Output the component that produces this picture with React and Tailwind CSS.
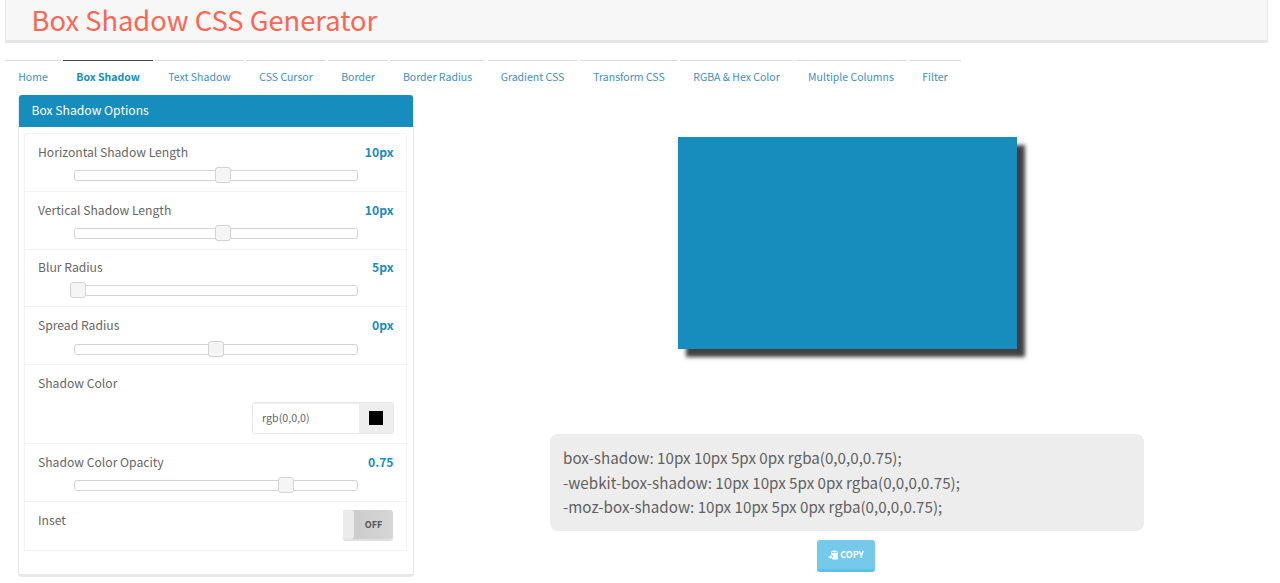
import React from "react";

const tabs = [
  ["Home", "w-[56px] mr-[2px]"],
  ["Box Shadow", "w-[90px] mr-[2px]"],
  ["Text Shadow", "w-[89px] mr-[2px]"],
  ["CSS Cursor", "w-[80px] mr-[2px]"],
  ["Border", "w-[60px] mr-[2px]"],
  ["Border Radius", "w-[95px] mr-[3px]"],
  ["Gradient CSS", "w-[89px] mr-[3px]"],
  ["Transform CSS", "w-[98px] mr-[2px]"],
  ["RGBA & Hex Color", "w-[113px] mr-[2px]"],
  ["Multiple Columns", "w-[112px] mr-[2px]"],
  ["Filter", "w-[52px]"],
];

function Row({ label, value, height, pad = "pt-[8px]", children }) {
  return (
    <div className={"flex flex-col border-b border-[#f3f3f3] pl-[13px] pr-[13px] " + pad + " " + height}>
      <div className="flex h-5 shrink-0 items-center justify-between">
        <span>{label}</span>
        {value && <b className="-mr-[0.5px] text-[#168dbc]">{value}</b>}
      </div>
      {children}
    </div>
  );
}

function Slider({ left }) {
  return (
    <div className="relative mt-[8px] ml-[36px] h-[11px] w-[284px] rounded-[3px] border border-[#d3d3d3] bg-white">
      <div
        className="absolute -top-[4px] h-4 w-4 rounded-[3px] border border-[#d3d3d3] bg-[#f5f5f5]"
        style={{ left }}
      />
    </div>
  );
}

function CopyIcon() {
  return (
    <svg width="11" height="10" viewBox="0 0 11 10" fill="currentColor">
      <path d="M4.2.8h1.2A1 1 0 0 1 7.2.8h1.3v1.5H4.2z" />
      <path d="M3 1.4h.7v1.5h5.2V1.4h.9V9.6H4.8L3.6 8.6l2.2-2L3 4.2z" />
      <path d="M.4 6.4h2V5L4.8 7 2.4 9V7.8H.4z" />
    </svg>
  );
}

export default function App() {
  return (
    <div className="h-[583px] w-[1280px] overflow-hidden bg-white font-['Noto_Sans_CJK_SC','Noto_Sans',sans-serif] text-[12.15px] text-[#666]">
      <header className="ml-[5px] flex h-[43px] w-[1263px] items-center border-x border-b-[3px] border-[#e6e6e6] bg-[#f7f7f7] pb-[2px] pl-[25.5px]">
        <h1 className="text-[27.3px] leading-[38px] whitespace-nowrap text-[#ff6550]">Box Shadow CSS Generator</h1>
      </header>

      <nav className="mt-[17px] ml-[5px] flex h-[35px] text-[10.5px] whitespace-nowrap text-[#428fba]">
        {tabs.map(([name, size], i) => (
          <a
            key={name}
            className={
              "flex h-[34px] shrink-0 items-center justify-center border-t pb-[1px] " +
              size +
              (i === 1 ? " border-[#444] font-bold text-[#168dbc]" : " border-[#ddd]")
            }
          >
            {name}
          </a>
        ))}
      </nav>

      <main className="flex">
        <section className="ml-[18px] h-[482px] w-[396px] rounded-[4px] border border-t-0 border-b-[3px] border-[#e8e8e8]">
          <h2 className="flex h-[32px] items-center rounded-t-[3px] bg-[#168dbc] pb-[1px] pl-[12.5px] text-white">
            Box Shadow Options
          </h2>
          <div className="mx-[5px] mt-[6px] w-[383px] rounded-t-[3px] border border-b-0 border-[#f3f3f3]">
            <Row label="Horizontal Shadow Length" value="10px" height="h-[58px]"><Slider left={140} /></Row>
            <Row label="Vertical Shadow Length" value="10px" height="h-[58px]"><Slider left={140} /></Row>
            <Row label="Blur Radius" value="5px" height="h-[57px]" pad="pt-[7px]"><Slider left={-5} /></Row>
            <Row label="Spread Radius" value="0px" height="h-[58px]" pad="pt-[8.5px]"><Slider left={133} /></Row>
            <Row label="Shadow Color" height="h-[79px]">
              <div className="mt-[9px] -mr-[0.5px] flex h-[32px] w-[142px] shrink-0 self-end rounded-[3px] border border-[#e8e8e8]">
                <div className="flex w-[106px] items-center border-t border-[#eee] pb-[1px] pl-[9.5px] text-[10.7px]">rgb(0,0,0)</div>
                <div className="flex flex-1 items-center justify-center bg-[#eee]">
                  <div className="h-[14px] w-[14px] bg-black" />
                </div>
              </div>
            </Row>
            <Row label="Shadow Color Opacity" value="0.75" height="h-[58px]"><Slider left={203} /></Row>
            <div className="flex h-[49px] justify-between border-b border-[#f3f3f3] pt-[8px] pr-[13px] pl-[13px]">
              <span className="leading-5">Inset</span>
              <div className="flex h-[31px] w-[50px] overflow-hidden rounded-[3px] border-b-2 border-[#e0e0e0] bg-linear-to-r from-[#c9c9c9] to-[#d6d6d6]">
                <div className="w-[11px] rounded-r-[3px] bg-[#ebebeb]" />
                <div className="flex flex-1 items-center justify-center text-[9px] font-bold text-[#555]">OFF</div>
              </div>
            </div>
          </div>
        </section>

        <section className="ml-[136px] flex w-[594px] flex-col items-center pt-[42px]">
          <div className="h-[212px] w-[339px] bg-[#168dbc] shadow-[8px_8px_4px_0px_rgba(0,0,0,0.75)]" />
          <div className="mt-[85px] h-[97px] w-[594px] rounded-[8px] bg-[#ededed] pt-[11px] pl-[13px] text-[15.18px] leading-[24.5px] whitespace-nowrap text-[#606060]">
            <div><span>box-shadow: 10px 10px 5px 0px rgba(0,0,0,0.75);</span></div>
            <div><span>-webkit-box-shadow: 10px 10px 5px 0px rgba(0,0,0,0.75);</span></div>
            <div><span>-moz-box-shadow: 10px 10px 5px 0px rgba(0,0,0,0.75);</span></div>
          </div>
          <button className="mt-[9px] mr-[2px] flex h-[32px] w-[58px] items-center justify-center gap-[1px] rounded-[3px] border-b-[3px] border-[#5fc0e6] bg-[#75caeb] text-[9px] font-bold text-white">
            <CopyIcon />
            <span>COPY</span>
          </button>
        </section>
      </main>
    </div>
  );
}
